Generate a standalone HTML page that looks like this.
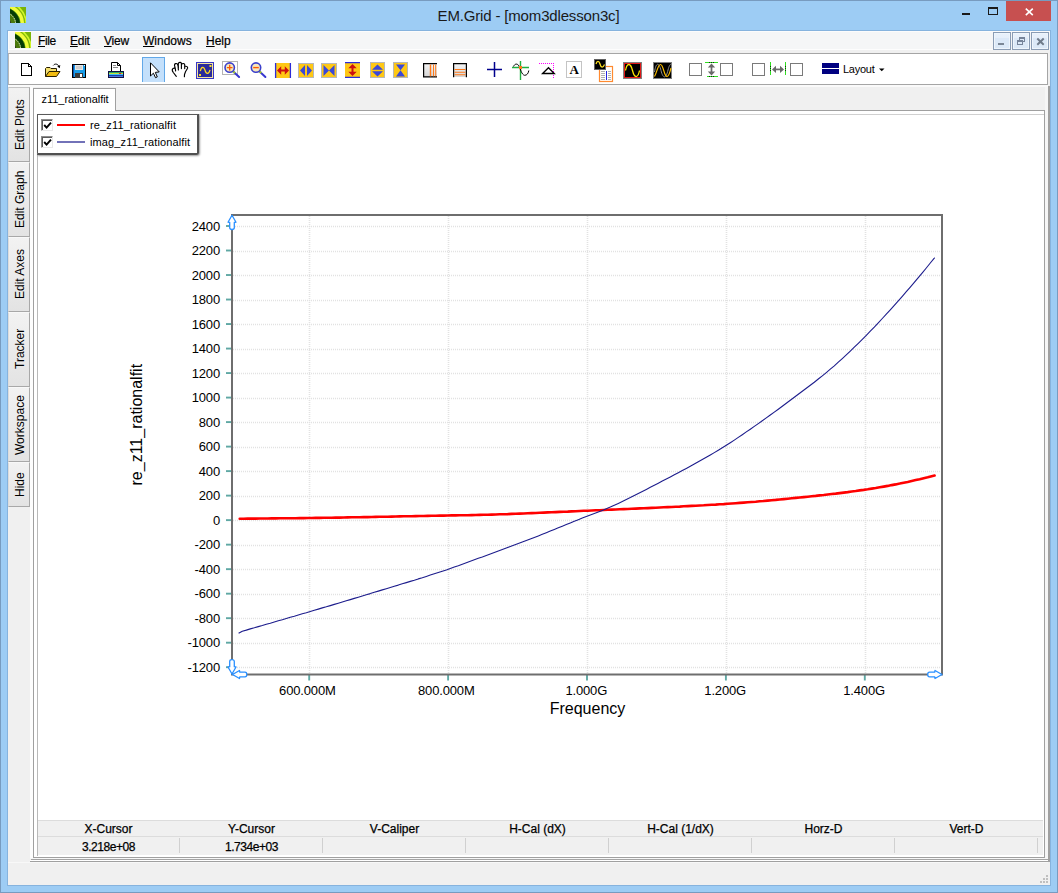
<!DOCTYPE html>
<html><head><meta charset="utf-8"><title>EM.Grid - [mom3dlesson3c]</title>
<style>
*{box-sizing:border-box;margin:0;padding:0}
html,body{width:1058px;height:893px;overflow:hidden}
body{background:#9dccf4;font-family:"Liberation Sans",Arial,sans-serif;position:relative;color:#000}
.abs{position:absolute}
#frame{left:0;top:0;width:1058px;height:893px;border:1px solid #789bbf}
#title{left:0;top:6px;width:1058px;text-align:center;font-size:15px;line-height:20px;letter-spacing:-0.16px;color:#1a1a1a;text-indent:-1px}
#closeb{left:1006px;top:1px;width:45px;height:20px;background:#c75050}
#client{left:8px;top:31px;width:1042px;height:854px;background:#f0f0f0}
#menubar{left:8px;top:31px;width:1042px;height:19px;background:#f5f6f7;border-bottom:1px solid #fdfdfd;border-top:1px solid #fcfcfc;border-left:1px solid #fcfcfc}
.mi{-webkit-text-stroke:0.2px #000;top:34px;font-size:12px;line-height:14px;height:14px;white-space:pre}
.mi u{text-decoration:underline;text-decoration-thickness:1px;text-underline-offset:1px}
.mdib{top:32px;width:18px;height:18px;border:1px solid #8a9cb4;background:linear-gradient(#e8f1fb 0,#e6effa 30%,#dbe8f7 34%,#dce9f7 100%);box-shadow:inset 0 0 0 1px #eef5fc}
#toolbar{left:8px;top:53px;width:1040px;height:32px;background:#fff;border:1px solid #a5a5a5;border-left-color:#b8b8b8}
.stab{left:8px;width:22px;border-top:1px solid #f8f8f8;border-left:1px solid #dcdcdc;border-right:1px solid #a8a8a8;border-bottom:1px solid #a8a8a8;background:linear-gradient(#f2f2f2,#e3e3e3)}
.stab span{position:absolute;left:0;top:0;display:block;white-space:pre;font-size:12px;line-height:12px;transform-origin:0 0}
#tabpanel{left:33px;top:110px;width:1012px;height:748px;background:#fff;border:1px solid #a0a0a0}
#tab{left:33px;top:88px;width:83px;height:23px;background:#fff;border:1px solid #a0a0a0;border-bottom:none;font-size:11px;line-height:13px;padding:4px 0 0 7.500px;letter-spacing:-0.04px;white-space:pre}
#graph{left:37px;top:114px;width:1007px;height:742px;border-left:1px solid #b9b9b9;border-top:1px solid #d0d0d0;background:#fff}
#legend{left:37px;top:114px;width:162px;height:41px;background:#fff;border:1px solid #5a5a5a;border-right:2px solid #505050;border-bottom:2px solid #505050;border-bottom-right-radius:3px;box-shadow:1px 1px 2px rgba(0,0,0,.4)}
.cb{width:12px;height:12px;background:#fff;border:1px solid;border-color:#8c8c8c #e8e8e8 #e8e8e8 #8c8c8c;box-shadow:inset 1px 1px 0 #5a5a5a}
.lt{font-size:11px;line-height:13px;white-space:pre;left:90px}
#stat{left:38px;top:820px;width:1005px;height:35px;background:#f0f0f0;border-top:1px solid #dcdcdc}
.sh{-webkit-text-stroke:0.25px #000;top:822px;width:143px;text-align:center;font-size:12px;line-height:14px;white-space:pre}
.sv{-webkit-text-stroke:0.25px #000;top:840px;width:143px;text-align:center;font-size:12px;line-height:14px;letter-spacing:-0.45px;white-space:pre}
.sep{top:838px;width:1px;height:15px;background:#d0d0d0}
</style></head><body>
<div class="abs" id="frame"></div>
<!-- title bar -->
<svg class="abs" style="left:10px;top:7px" width="16" height="16" viewBox="0 0 16 16">
<defs><clipPath id="ac"><rect width="16" height="16"/></clipPath></defs>
<rect width="16" height="16" fill="#7ab408"/>
<g clip-path="url(#ac)" fill="none">
<circle cx="-6" cy="17" r="22.2" stroke="#d0f428" stroke-width="1.700"/>
<circle cx="-6" cy="17" r="20.7" stroke="#86b80c" stroke-width="0.900"/>
<circle cx="-6" cy="17" r="18.2" stroke="#f2fc3c" stroke-width="3.800"/>
<circle cx="-6" cy="17" r="16.3" stroke="#6aa818" stroke-width="1"/>
<circle cx="-6" cy="17" r="14" stroke="#063c06" stroke-width="4"/>
<circle cx="-6" cy="17" r="12" fill="#4a7a0c"/>
<circle cx="-6" cy="17" r="11.6" stroke="#f4f4f4" stroke-width="1" stroke-dasharray="1.100 0.900"/>
<circle cx="-6" cy="17" r="7" fill="#2c2430"/>
</g></svg>
<div class="abs" id="title">EM.Grid - [mom3dlesson3c]</div>
<div class="abs" style="left:962px;top:13px;width:8px;height:2px;background:#1a1a1a"></div>
<div class="abs" style="left:988px;top:7px;width:10px;height:8px;border:1px solid #1a1a1a;border-top-width:2px"></div>
<div class="abs" id="closeb"><svg class="abs" style="left:19px;top:6px" width="9" height="9" viewBox="0 0 9 9"><path d="M0.800,1.600 L7.800,8.200 M7.800,1.600 L0.800,8.200" stroke="#fff" stroke-width="1.600"/></svg></div>
<!-- client -->
<div class="abs" style="left:7px;top:30px;width:1044px;height:856px;background:#86b3de"></div>
<div class="abs" id="client"></div>
<div class="abs" id="menubar"></div>
<svg class="abs" style="left:15px;top:32px" width="16" height="16" viewBox="0 0 16 16">
<defs><clipPath id="bc"><rect width="16" height="16"/></clipPath></defs>
<rect width="16" height="16" fill="#7ab408"/>
<g clip-path="url(#bc)" fill="none">
<circle cx="-6" cy="17" r="22.2" stroke="#d0f428" stroke-width="1.700"/>
<circle cx="-6" cy="17" r="20.7" stroke="#86b80c" stroke-width="0.900"/>
<circle cx="-6" cy="17" r="18.2" stroke="#f2fc3c" stroke-width="3.800"/>
<circle cx="-6" cy="17" r="16.3" stroke="#6aa818" stroke-width="1"/>
<circle cx="-6" cy="17" r="14" stroke="#063c06" stroke-width="4"/>
<circle cx="-6" cy="17" r="12" fill="#4a7a0c"/>
<circle cx="-6" cy="17" r="11.6" stroke="#f4f4f4" stroke-width="1" stroke-dasharray="1.100 0.900"/>
<circle cx="-6" cy="17" r="7" fill="#2c2430"/>
</g></svg>
<div class="abs mi" style="left:38px;letter-spacing:-0.35px"><u>F</u>ile</div>
<div class="abs mi" style="left:70px;letter-spacing:-0.25px"><u>E</u>dit</div>
<div class="abs mi" style="left:104px;letter-spacing:-0.2px"><u>V</u>iew</div>
<div class="abs mi" style="left:143px"><u>W</u>indows</div>
<div class="abs mi" style="left:206px"><u>H</u>elp</div>
<div class="abs mdib" style="left:993px"><div class="abs" style="left:4px;top:10px;width:6px;height:2px;background:#7b8796"></div></div>
<div class="abs mdib" style="left:1012px"><svg class="abs" style="left:3px;top:3px" width="10" height="10" viewBox="0 0 10 10" shape-rendering="crispEdges" fill="#76849a"><rect x="3" y="1" width="6" height="2"/><rect x="8" y="1" width="1" height="5"/><rect x="7" y="5" width="2" height="1"/><rect x="3" y="3" width="1" height="1"/><rect x="1" y="4" width="6" height="2"/><rect x="1" y="4" width="1" height="5"/><rect x="6" y="4" width="1" height="5"/><rect x="1" y="8" width="6" height="1"/></svg></div>
<div class="abs mdib" style="left:1031px"><svg class="abs" style="left:4px;top:4px" width="9" height="9" viewBox="0 0 9 9"><path d="M1.300,1.500 L7.700,7.700 M7.700,1.500 L1.300,7.700" stroke="#6f7b8a" stroke-width="1.900"/></svg></div>
<!-- toolbar -->
<div class="abs" id="toolbar"></div>
<svg class="abs" style="left:0;top:0" width="1058" height="893" viewBox="0 0 1058 893">
<g shape-rendering="crispEdges"><path d="M21.5,63.5 H28.5 L31.5,66.5 V75.5 H21.5 Z" fill="#fff" stroke="#000"/><path d="M28.5,63.5 V66.5 H31.5" fill="none" stroke="#000"/></g>
<path d="M45.5,76.5 V68.5 L46.5,67.5 H50 L51,68.5 H56.5 V71.5" fill="#f4e070" stroke="#2a2000" stroke-width="1"/><path d="M45.5,76.5 L49,71.5 H60 L56.5,76.5 Z" fill="#f2bc10" stroke="#2a2000" stroke-width="1" stroke-linejoin="round"/><path d="M53.300,65.400 C54.800,63.400 57.800,63.600 59,66.600" fill="none" stroke="#000" stroke-width="1"/><path d="M57.300,66.600 L59.700,68.200 L60.300,65 Z" fill="#000"/>
<g shape-rendering="crispEdges"><rect x="72.5" y="64.5" width="13" height="13" fill="#189ce8" stroke="#000"/><rect x="75" y="65" width="8" height="5" fill="#e6e6e6"/><rect x="76" y="66" width="6" height="3" fill="#cfcfcf"/><rect x="75" y="73" width="8" height="5" fill="#3c3c3c"/><rect x="80" y="74" width="2" height="3" fill="#fff"/><rect x="84" y="65" width="1" height="1" fill="#fff"/><rect x="73" y="65" width="1" height="12" fill="#0a50b0"/></g>
<path d="M111.5,71 V62.5 H117.5 L120.5,65.5 V71" fill="#fff" stroke="#000" stroke-width="1"/><path d="M117.5,62.5 V65.5 H120.5" fill="none" stroke="#000" stroke-width="1"/><path d="M113,65.5 H116 M113,67.5 H118" stroke="#888" stroke-width="1"/><g shape-rendering="crispEdges"><rect x="108" y="71" width="16" height="7" fill="#101040"/><rect x="109" y="72" width="14" height="1" fill="#2aa868"/><rect x="109" y="73" width="14" height="1" fill="#c8e038"/><rect x="109" y="74" width="14" height="1" fill="#38c0f0"/><rect x="109" y="75" width="14" height="1" fill="#1a38b0"/><rect x="109" y="76" width="14" height="1" fill="#4a78dc"/><rect x="119" y="73" width="2" height="1" fill="#e02020"/><rect x="121" y="73" width="1" height="1" fill="#f0a020"/></g>
<g shape-rendering="crispEdges"><rect x="142" y="57" width="23" height="25" fill="#c4e0fb"/><path d="M142.500,82 V57.500 H164.500 V82" fill="none" stroke="#62a8e8"/></g>
<path d="M150.500,62.800 V76 L153.400,73.200 L155.500,77.700 L157.300,76.900 L155.300,72.400 L159.200,71.900 Z" fill="#fff" stroke="#000" stroke-width="1" stroke-linejoin="miter"/>
<path d="M176.300,76.400 L173.300,72.500 C172.300,71 171.900,69.300 172.900,68.600 C173.800,68 175,68.200 175.300,68.600 L175.600,70.900 M175.300,68.600 L174.500,65.300 C174.300,63.600 176.500,63 177.400,64 C178.300,65.500 178.400,68 178.400,69.900 M178.400,68 L178.300,64 C178.600,62 181,62 181.400,63.400 L181.400,68.600 M181.500,65 C181.600,63.200 184.200,63 184.700,64.600 L184.700,68.600 M185.400,66.300 C186.600,66 187.900,66.800 187.600,68.200 L185.600,71.500 L184.500,74.500 L184.400,76.700" fill="none" stroke="#000" stroke-width="1.150" stroke-linecap="round" stroke-linejoin="round"/>
<g shape-rendering="crispEdges"><rect x="196.5" y="62.5" width="17" height="16" fill="#2a2a9c" stroke="#3838c8"/><rect x="197.5" y="63.5" width="15" height="14" fill="none" stroke="#f4e4a0"/></g><path d="M200.300,71.200 C201.300,66.300 203.800,66.300 205,70.300 C206.300,74.600 208.800,74.300 210,69.800" fill="none" stroke="#ffd820" stroke-width="1.250"/><rect x="209.500" y="65" width="2" height="2" fill="#ffe020"/><rect x="199" y="74" width="2" height="2" fill="#ffe020"/>
<rect x="222.5" y="61.5" width="15" height="13" fill="#fff" stroke="#b4b4b4" shape-rendering="crispEdges"/>
<path d="M233.0,71.2 L239.1,77" stroke="#3838d0" stroke-width="2" stroke-linecap="round"/><path d="M233.0,71.2 L234.89999999999998,73" stroke="#a0c830" stroke-width="2"/>
<circle cx="229.7" cy="67.6" r="4.700" fill="#f6e8bc" stroke="#3c40cc" stroke-width="1.600"/>
<path d="M226.89999999999998,67.6 H232.5 M229.7,64.8 V70.4" stroke="#ff5a00" stroke-width="1.300"/>
<path d="M259.3,71.2 L265.4,77" stroke="#3838d0" stroke-width="2" stroke-linecap="round"/><path d="M259.3,71.2 L261.2,73" stroke="#a0c830" stroke-width="2"/>
<circle cx="256" cy="67.6" r="4.700" fill="#f6e8bc" stroke="#3c40cc" stroke-width="1.600"/>
<path d="M253.2,67.6 H258.8" stroke="#ff5a00" stroke-width="1.400"/>
<rect x="275" y="63" width="16" height="15" fill="#ffc814"/><path d="M275.600,63 V78 M290.400,63 V78" stroke="#2c2cd8" stroke-width="1.300"/><path d="M279,70.500 H287" stroke="#cc1010" stroke-width="2"/><path d="M277,70.500 L281.200,66.300 V74.700 Z M289,70.500 L284.800,66.300 V74.700 Z" fill="#cc1010"/>
<rect x="298.5" y="63.5" width="15" height="14" fill="#ffc814" stroke="#b8b8b8" shape-rendering="crispEdges"/><path d="M300,70.500 L305,65 V76 Z M312,70.500 L307,65 V76 Z" fill="#3a48d8"/>
<rect x="321.5" y="63.5" width="15" height="14" fill="#ffc814" stroke="#b8b8b8" shape-rendering="crispEdges"/><path d="M323.500,65 L329,70.500 L323.500,76 Z M334.500,65 L329,70.500 L334.500,76 Z" fill="#3a48d8"/>
<rect x="345" y="62" width="15" height="16" fill="#ffc814"/><path d="M345,62.600 H360 M345,77.400 H360" stroke="#2c2cd8" stroke-width="1.300"/><path d="M352.500,66 V74" stroke="#cc1010" stroke-width="2"/><path d="M352.500,64 L348.300,68.200 H356.700 Z M352.500,76 L348.300,71.800 H356.700 Z" fill="#cc1010"/>
<rect x="370.5" y="62.5" width="14" height="15" fill="#ffc814" stroke="#b8b8b8" shape-rendering="crispEdges"/><path d="M377.500,64.500 L372,69.700 H383 Z M377.500,76.500 L372,71.300 H383 Z" fill="#3a48d8"/>
<rect x="393.5" y="62.5" width="14" height="15" fill="#ffc814" stroke="#b8b8b8" shape-rendering="crispEdges"/><path d="M396,64.500 H405 L400.500,70.300 Z M396,76.500 H405 L400.500,70.300 Z" fill="#3a48d8"/>
<defs><linearGradient id="pg" x1="0" y1="0" x2="0" y2="1"><stop offset="0" stop-color="#f4f4f4"/><stop offset="1" stop-color="#d4d4d4"/></linearGradient></defs>
<rect x="424" y="64" width="13" height="13" fill="url(#pg)"/><path d="M437,63.600 H423.600 V76.900 H437" fill="none" stroke="#000" stroke-width="1.200"/><path d="M430.500,64.500 V76.300" stroke="#ff7a1a" stroke-width="1.400"/><path d="M433.500,64.500 V76.300 M435.700,64.500 V76.300" stroke="#ff7a1a" stroke-width="1"/>
<rect x="454" y="64" width="12" height="13" fill="url(#pg)"/><path d="M453.600,77.300 V63.600 H466.400 V77.300" fill="none" stroke="#000" stroke-width="1.200"/><path d="M454.500,69.500 H465.500 M454.500,72.300 H465.500 M454.500,74.700 H465.500" stroke="#ff7a1a" stroke-width="1.100"/>
<path d="M487,69.500 H502 M494.500,62 V77" stroke="#00008c" stroke-width="1.500"/>
<path d="M520.500,61 V80 M512,67.500 H529" stroke="#20b040" stroke-width="1.400"/><path d="M513.500,66.500 C514.800,63.500 517.500,63.300 519,66 C520.500,69 521.500,74.500 524.500,75.300 C527,75.500 528.500,73 528.800,70.500" fill="none" stroke="#000" stroke-width="1"/><rect x="519" y="66" width="3" height="3" fill="#ff7a1a"/>
<path d="M539,63.500 H554 M553.500,63 V78" stroke="#ff00ff" stroke-width="1" stroke-dasharray="1 1" shape-rendering="crispEdges"/><path d="M542.600,73.500 L548.500,67.700 L554.300,73.500 Z" fill="none" stroke="#000" stroke-width="1.300"/>
<rect x="566.5" y="61.5" width="15" height="16" fill="#fff" stroke="#c4c4c4" shape-rendering="crispEdges"/><text x="574.300" y="73.800" text-anchor="middle" font-family="Liberation Serif, serif" font-weight="bold" font-size="13" fill="#000">A</text>
<rect x="599.5" y="66.5" width="13" height="15" fill="#fff" stroke="#ff8a30" stroke-width="1.200"/><path d="M601,71.500 H605 M601,73.500 H605 M601,75.500 H605 M601,77.500 H605 M601,79.500 H605 M608,71.500 H611 M608,73.500 H611 M608,75.500 H611 M608,77.500 H611 M608,79.500 H611" stroke="#b0b0b0" stroke-width="1" shape-rendering="crispEdges"/><path d="M606.500,70.500 V80" stroke="#2424e0" stroke-width="1" shape-rendering="crispEdges"/><rect x="594.5" y="59.5" width="11" height="10" fill="#000" stroke="#606060"/><path d="M596,64 C597,60.500 599,60.500 600,64 C601,68 603,68 604.500,64.500" fill="none" stroke="#ffe020" stroke-width="1.300"/>
<rect x="623.5" y="62.5" width="18" height="16" fill="#000" stroke="#808080" shape-rendering="crispEdges"/><rect x="624.5" y="63.5" width="16" height="14" fill="none" stroke="#e01818" shape-rendering="crispEdges"/><path d="M625.500,70.500 C627,62.500 630.500,62.500 632.500,70.500 C634.500,78.500 638,78.500 639.500,70.500" fill="none" stroke="#ffe800" stroke-width="1.300"/>
<rect x="653.5" y="62.5" width="18" height="16" fill="#000" stroke="#808080" shape-rendering="crispEdges"/><path d="M654.500,72 C656,62 659,62 661,70.500 C663,79 666,79 668,70 C669,66 670,64.500 671,64" fill="none" stroke="#8c8c8c" stroke-width="1"/><path d="M654.500,76.500 C657,72 658,64.500 660.500,64.500 C663.500,64.500 664,76.500 667,76.500 C669,76.500 670,72 671,68" fill="none" stroke="#ffc000" stroke-width="1.150"/>
<rect x="689.5" y="63.5" width="12" height="12" fill="#fff" stroke="#7a7a7a" stroke-width="1"/>
<rect x="720.5" y="63.5" width="12" height="12" fill="#fff" stroke="#7a7a7a" stroke-width="1"/>
<g shape-rendering="crispEdges"><path d="M705,62.500 H718 M707,76.500 H718" stroke="#30e020" stroke-width="1"/><path d="M709,62.500 H715 M709,76.500 H715" stroke="#103010" stroke-width="1" stroke-dasharray="1 1"/></g><path d="M711.500,66 V73" stroke="#6a6a6a" stroke-width="1.700"/><path d="M711.500,63.600 L707.800,67.600 H715.200 Z M711.500,75.400 L707.800,71.400 H715.200 Z" fill="#6a6a6a"/>
<rect x="752.5" y="63.5" width="12" height="12" fill="#fff" stroke="#7a7a7a" stroke-width="1"/>
<rect x="790.5" y="63.5" width="12" height="12" fill="#fff" stroke="#7a7a7a" stroke-width="1"/>
<g shape-rendering="crispEdges"><path d="M770.500,62 V75 M785.500,62 V75" stroke="#30e020" stroke-width="1"/><path d="M770.500,66 V72 M785.500,66 V72" stroke="#103010" stroke-width="1" stroke-dasharray="1 1"/></g><path d="M774.500,69.400 H781.500" stroke="#6a6a6a" stroke-width="1.700"/><path d="M772,69.400 L776,65.700 V73.100 Z M784,69.400 L780,65.700 V73.100 Z" fill="#6a6a6a"/>
<g shape-rendering="crispEdges"><rect x="822" y="63" width="17" height="5" fill="#000080"/><rect x="822" y="69" width="17" height="5" fill="#000080"/></g>
<path d="M879,68.500 H884.500 L881.750,71.300 Z" fill="#000"/>
</svg>
<div class="abs" style="left:843px;top:63px;font-size:11px;line-height:13px;letter-spacing:-0.25px;white-space:pre;transform:scaleY(1.07);transform-origin:0 10px">Layout</div>
<!-- right shadow line -->
<div class="abs" style="left:1048px;top:86px;width:2px;height:776px;background:#a0a0a0"></div>
<div class="abs" style="left:8px;top:85px;width:1040px;height:2px;background:#fafafa"></div>
<!-- sidebar -->
<div class="abs stab" style="top:87px;height:75px;border-top-color:#c4c4c4"><span style="transform:translate(5px,62px) rotate(-90deg)">Edit Plots</span></div>
<div class="abs stab" style="top:162px;height:75px"><span style="transform:translate(5px,65px) rotate(-90deg)">Edit Graph</span></div>
<div class="abs stab" style="top:237px;height:75px"><span style="transform:translate(5px,61px) rotate(-90deg)">Edit Axes</span></div>
<div class="abs stab" style="top:312px;height:75px"><span style="transform:translate(5px,56px) rotate(-90deg)">Tracker</span></div>
<div class="abs stab" style="top:387px;height:75px"><span style="transform:translate(5px,67px) rotate(-90deg)">Workspace</span></div>
<div class="abs stab" style="top:462px;height:45px"><span style="transform:translate(5px,34px) rotate(-90deg)">Hide</span></div>
<!-- tab panel -->
<div class="abs" style="left:30px;top:87px;width:3px;height:772px;background:#fdfdfd"></div>
<div class="abs" style="left:1045px;top:87px;width:3px;height:772px;background:#f6f6f6"></div>
<div class="abs" style="left:116px;top:88px;width:929px;height:22px;background:#f0f0f0"></div>
<div class="abs" id="tabpanel"></div>
<div class="abs" id="tab">z11_rationalfit</div>
<div class="abs" id="graph"></div>
<svg class="abs" style="left:0;top:0" width="1058" height="893" viewBox="0 0 1058 893">
<g stroke="#e2e2e2" stroke-width="1.600" stroke-dasharray="1 1" ><line x1="233" y1="667.5" x2="941" y2="667.5"/><line x1="233" y1="643.5" x2="941" y2="643.5"/><line x1="233" y1="618.5" x2="941" y2="618.5"/><line x1="233" y1="594.5" x2="941" y2="594.5"/><line x1="233" y1="569.5" x2="941" y2="569.5"/><line x1="233" y1="545.5" x2="941" y2="545.5"/><line x1="233" y1="520.5" x2="941" y2="520.5"/><line x1="233" y1="496.5" x2="941" y2="496.5"/><line x1="233" y1="471.5" x2="941" y2="471.5"/><line x1="233" y1="447.5" x2="941" y2="447.5"/><line x1="233" y1="422.5" x2="941" y2="422.5"/><line x1="233" y1="398.5" x2="941" y2="398.5"/><line x1="233" y1="373.5" x2="941" y2="373.5"/><line x1="233" y1="349.5" x2="941" y2="349.5"/><line x1="233" y1="324.5" x2="941" y2="324.5"/><line x1="233" y1="300.5" x2="941" y2="300.5"/><line x1="233" y1="275.5" x2="941" y2="275.5"/><line x1="233" y1="251.5" x2="941" y2="251.5"/><line x1="233" y1="226.5" x2="941" y2="226.5"/><line x1="309.5" y1="216" x2="309.5" y2="673.5"/><line x1="448.5" y1="216" x2="448.5" y2="673.5"/><line x1="587.5" y1="216" x2="587.5" y2="673.5"/><line x1="726.5" y1="216" x2="726.5" y2="673.5"/><line x1="865.5" y1="216" x2="865.5" y2="673.5"/></g>
<g stroke="#5fa8a4" stroke-width="1.9"><line x1="226" y1="667.20" x2="232" y2="667.20"/><line x1="226" y1="642.69" x2="232" y2="642.69"/><line x1="226" y1="618.18" x2="232" y2="618.18"/><line x1="226" y1="593.67" x2="232" y2="593.67"/><line x1="226" y1="569.16" x2="232" y2="569.16"/><line x1="226" y1="544.65" x2="232" y2="544.65"/><line x1="226" y1="520.13" x2="232" y2="520.13"/><line x1="226" y1="495.62" x2="232" y2="495.62"/><line x1="226" y1="471.11" x2="232" y2="471.11"/><line x1="226" y1="446.60" x2="232" y2="446.60"/><line x1="226" y1="422.09" x2="232" y2="422.09"/><line x1="226" y1="397.58" x2="232" y2="397.58"/><line x1="226" y1="373.07" x2="232" y2="373.07"/><line x1="226" y1="348.56" x2="232" y2="348.56"/><line x1="226" y1="324.04" x2="232" y2="324.04"/><line x1="226" y1="299.53" x2="232" y2="299.53"/><line x1="226" y1="275.02" x2="232" y2="275.02"/><line x1="226" y1="250.51" x2="232" y2="250.51"/><line x1="226" y1="226.00" x2="232" y2="226.00"/><line x1="309.20" y1="674.5" x2="309.20" y2="680.5"/><line x1="448.10" y1="674.5" x2="448.10" y2="680.5"/><line x1="587.00" y1="674.5" x2="587.00" y2="680.5"/><line x1="725.90" y1="674.5" x2="725.90" y2="680.5"/><line x1="864.80" y1="674.5" x2="864.80" y2="680.5"/></g>
<rect x="232" y="215" width="710" height="459.5" fill="none" stroke="#6e6e6e" stroke-width="2"/>
<polyline points="239.7,518.7 243.7,518.7 247.7,518.6 251.7,518.6 255.7,518.6 259.7,518.5 263.7,518.5 267.7,518.5 271.7,518.4 275.7,518.4 279.7,518.3 283.7,518.3 287.7,518.3 291.7,518.2 295.7,518.2 299.7,518.1 303.7,518.1 307.7,518.0 311.7,518.0 315.7,517.9 319.7,517.9 323.7,517.8 327.7,517.7 331.7,517.7 335.7,517.6 339.7,517.6 343.7,517.5 347.7,517.4 351.7,517.3 355.7,517.3 359.7,517.2 363.7,517.1 367.7,517.1 371.7,517.0 375.7,516.9 379.7,516.8 383.7,516.7 387.7,516.7 391.7,516.6 395.7,516.5 399.7,516.4 403.7,516.3 407.7,516.3 411.7,516.2 415.7,516.1 419.7,516.0 423.7,516.0 427.7,515.9 431.7,515.8 435.7,515.7 439.7,515.6 443.7,515.6 447.7,515.5 451.7,515.4 455.7,515.4 459.7,515.3 463.7,515.2 467.7,515.2 471.7,515.1 475.7,515.0 479.7,514.9 483.7,514.8 487.7,514.7 491.7,514.6 495.7,514.5 499.7,514.3 503.7,514.2 507.7,514.1 511.7,513.9 515.7,513.8 519.7,513.6 523.7,513.5 527.7,513.3 531.7,513.1 535.7,513.0 539.7,512.8 543.7,512.6 547.7,512.4 551.7,512.3 555.7,512.1 559.7,511.9 563.7,511.7 567.7,511.6 571.7,511.4 575.7,511.2 579.7,511.0 583.7,510.8 587.7,510.7 591.7,510.5 595.7,510.3 599.7,510.2 603.7,510.0 607.7,509.8 611.7,509.6 615.7,509.5 619.7,509.3 623.7,509.1 627.7,509.0 631.7,508.8 635.7,508.6 639.7,508.4 643.7,508.3 647.7,508.1 651.7,507.9 655.7,507.7 659.7,507.5 663.7,507.3 667.7,507.1 671.7,507.0 675.7,506.8 679.7,506.6 683.7,506.3 687.7,506.1 691.7,505.9 695.7,505.7 699.7,505.5 703.7,505.3 707.7,505.0 711.7,504.8 715.7,504.6 719.7,504.3 723.7,504.1 727.7,503.8 731.7,503.5 735.7,503.2 739.7,502.9 743.7,502.6 747.7,502.3 751.7,502.0 755.7,501.7 759.7,501.3 763.7,501.0 767.7,500.6 771.7,500.2 775.7,499.9 779.7,499.5 783.7,499.1 787.7,498.7 791.7,498.3 795.7,497.9 799.7,497.5 803.7,497.1 807.7,496.7 811.7,496.3 815.7,495.9 819.7,495.4 823.7,495.0 827.7,494.5 831.7,494.0 835.7,493.6 839.7,493.1 843.7,492.6 847.7,492.1 851.7,491.5 855.7,491.0 859.7,490.4 863.7,489.9 867.7,489.3 871.7,488.6 875.7,488.0 879.7,487.3 883.7,486.6 887.7,485.9 891.7,485.1 895.7,484.4 899.7,483.6 903.7,482.7 907.7,481.9 911.7,481.0 915.7,480.1 919.7,479.2 923.7,478.2 927.7,477.3 931.7,476.2 934.6,475.5" fill="none" stroke="#ff0000" stroke-width="2.600" stroke-linejoin="round" stroke-linecap="round"/>
<polyline points="238.6,633.3 242.3,631.2 246.3,630.1 250.3,628.9 254.3,627.8 258.3,626.6 262.3,625.5 266.3,624.3 270.3,623.2 274.3,622.0 278.3,620.8 282.3,619.7 286.3,618.5 290.3,617.3 294.3,616.2 298.3,615.0 302.3,613.8 306.3,612.7 310.3,611.5 314.3,610.3 318.3,609.1 322.3,607.9 326.3,606.8 330.3,605.6 334.3,604.4 338.3,603.2 342.3,602.0 346.3,600.8 350.3,599.6 354.3,598.4 358.3,597.2 362.3,596.0 366.3,594.8 370.3,593.6 374.3,592.3 378.3,591.1 382.3,589.9 386.3,588.7 390.3,587.5 394.3,586.3 398.3,585.1 402.3,583.8 406.3,582.6 410.3,581.4 414.3,580.2 418.3,578.9 422.3,577.7 426.3,576.4 430.3,575.1 434.3,573.8 438.3,572.5 442.3,571.2 446.3,569.9 450.3,568.5 454.3,567.1 458.3,565.7 462.3,564.2 466.3,562.8 470.3,561.3 474.3,559.8 478.3,558.3 482.3,556.9 486.3,555.4 490.3,553.9 494.3,552.5 498.3,551.0 502.3,549.5 506.3,548.0 510.3,546.6 514.3,545.1 518.3,543.6 522.3,542.1 526.3,540.5 530.3,539.0 534.3,537.4 538.3,535.9 542.3,534.3 546.3,532.7 550.3,531.1 554.3,529.4 558.3,527.8 562.3,526.2 566.3,524.6 570.3,522.9 574.3,521.3 578.3,519.7 582.3,518.1 586.3,516.6 590.3,515.0 594.3,513.6 598.3,512.1 602.3,510.5 606.3,508.8 610.3,507.1 614.3,505.2 618.3,503.4 622.3,501.5 626.3,499.5 630.3,497.6 634.3,495.5 638.3,493.5 642.3,491.5 646.3,489.4 650.3,487.3 654.3,485.2 658.3,483.2 662.3,481.1 666.3,479.0 670.3,476.9 674.3,474.8 678.3,472.7 682.3,470.6 686.3,468.4 690.3,466.3 694.3,464.1 698.3,461.8 702.3,459.6 706.3,457.3 710.3,455.0 714.3,452.6 718.3,450.2 722.3,447.8 726.3,445.3 730.3,442.7 734.3,440.1 738.3,437.4 742.3,434.7 746.3,431.9 750.3,429.2 754.3,426.4 758.3,423.6 762.3,420.8 766.3,417.9 770.3,415.0 774.3,412.1 778.3,409.2 782.3,406.2 786.3,403.3 790.3,400.3 794.3,397.3 798.3,394.2 802.3,391.2 806.3,388.2 810.3,385.2 814.3,382.2 818.3,379.0 822.3,375.9 826.3,372.6 830.3,369.2 834.3,365.8 838.3,362.2 842.3,358.6 846.3,354.9 850.3,351.1 854.3,347.2 858.3,343.3 862.3,339.3 866.3,335.3 870.3,331.2 874.3,327.1 878.3,322.8 882.3,318.5 886.3,314.2 890.3,309.8 894.3,305.3 898.3,300.8 902.3,296.3 906.3,291.7 910.3,287.1 914.3,282.4 918.3,277.6 922.3,272.8 926.3,268.0 930.3,263.0 934.3,258.1 934.6,257.7" fill="none" stroke="#1c1c8c" stroke-width="1.1" stroke-linejoin="round"/>
<g font-family="Liberation Sans, Arial, sans-serif" font-size="13" letter-spacing="-0.15" fill="#000"><text x="220" y="671.9" text-anchor="end">-1200</text><text x="220" y="647.4" text-anchor="end">-1000</text><text x="220" y="622.9" text-anchor="end">-800</text><text x="220" y="598.4" text-anchor="end">-600</text><text x="220" y="573.9" text-anchor="end">-400</text><text x="220" y="549.3" text-anchor="end">-200</text><text x="220" y="524.8" text-anchor="end">0</text><text x="220" y="500.3" text-anchor="end">200</text><text x="220" y="475.8" text-anchor="end">400</text><text x="220" y="451.3" text-anchor="end">600</text><text x="220" y="426.8" text-anchor="end">800</text><text x="220" y="402.3" text-anchor="end">1000</text><text x="220" y="377.8" text-anchor="end">1200</text><text x="220" y="353.3" text-anchor="end">1400</text><text x="220" y="328.7" text-anchor="end">1600</text><text x="220" y="304.2" text-anchor="end">1800</text><text x="220" y="279.7" text-anchor="end">2000</text><text x="220" y="255.2" text-anchor="end">2200</text><text x="220" y="230.7" text-anchor="end">2400</text><text x="307.4" y="694.8" text-anchor="middle">600.000M</text><text x="446.3" y="694.8" text-anchor="middle">800.000M</text><text x="586.3" y="694.8" text-anchor="middle">1.000G</text><text x="725.2" y="694.8" text-anchor="middle">1.200G</text><text x="864.1" y="694.8" text-anchor="middle">1.400G</text></g>
<text x="587.5" y="713.6" text-anchor="middle" font-family="Liberation Sans, Arial, sans-serif" font-size="16" fill="#000">Frequency</text>
<text transform="translate(142,424.7) rotate(-90)" text-anchor="middle" font-family="Liberation Sans, Arial, sans-serif" font-size="16" fill="#000">re_z11_rationalfit</text>
<g fill="#fff" stroke="#2a90ff" stroke-width="1.3" stroke-linejoin="round"><path d="M0,-7 L4,0 L2.3,0.3 L2.3,5.5 Q2.3,7.3 0,7.3 Q-2.3,7.3 -2.3,5.5 L-2.3,0.3 L-4,0 Z" transform="translate(232,222.2)"/><path d="M0,-7 L4,0 L2.3,0.3 L2.3,5.5 Q2.3,7.3 0,7.3 Q-2.3,7.3 -2.3,5.5 L-2.3,0.3 L-4,0 Z" transform="translate(232,667) rotate(180)"/><path d="M0,-7 L4,0 L2.3,0.3 L2.3,5.5 Q2.3,7.3 0,7.3 Q-2.3,7.3 -2.3,5.5 L-2.3,0.3 L-4,0 Z" transform="translate(239.5,674.5) rotate(-90)"/><path d="M0,-7 L4,0 L2.3,0.3 L2.3,5.5 Q2.3,7.3 0,7.3 Q-2.3,7.3 -2.3,5.5 L-2.3,0.3 L-4,0 Z" transform="translate(935,674.5) rotate(90)"/></g>
</svg>
<!-- legend -->
<div class="abs" id="legend"></div>
<div class="abs cb" style="left:41px;top:119px"><svg class="abs" style="left:1px;top:1px" width="9" height="9" viewBox="0 0 9 9"><path d="M1.2,4 L3.6,6.6 L8,1.6" fill="none" stroke="#000" stroke-width="1.9"/></svg></div>
<div class="abs cb" style="left:41px;top:136px"><svg class="abs" style="left:1px;top:1px" width="9" height="9" viewBox="0 0 9 9"><path d="M1.2,4 L3.6,6.6 L8,1.6" fill="none" stroke="#000" stroke-width="1.9"/></svg></div>
<div class="abs" style="left:57px;top:124px;width:28px;height:2px;background:#ff0000"></div>
<div class="abs" style="left:57px;top:141px;width:28px;height:1.5px;background:#7272b8"></div>
<div class="abs lt" style="top:119px;letter-spacing:0.14px">re_z11_rationalfit</div>
<div class="abs lt" style="top:136px;letter-spacing:0.13px">imag_z11_rationalfit</div>
<!-- status grid -->
<div class="abs" id="stat"></div>
<div class="abs" style="left:38px;top:836px;width:1005px;height:1px;background:#dcdcdc"></div>
<div class="abs sh" style="left:37px">X-Cursor</div>
<div class="abs sh" style="left:180px">Y-Cursor</div>
<div class="abs sh" style="left:323px">V-Caliper</div>
<div class="abs sh" style="left:466px">H-Cal (dX)</div>
<div class="abs sh" style="left:609px">H-Cal (1/dX)</div>
<div class="abs sh" style="left:752px">Horz-D</div>
<div class="abs sh" style="left:895px">Vert-D</div>
<div class="abs sv" style="left:37px">3.218e+08</div>
<div class="abs sv" style="left:180px">1.734e+03</div>
<div class="abs sep" style="left:179px"></div><div class="abs sep" style="left:322px"></div><div class="abs sep" style="left:465px"></div><div class="abs sep" style="left:608px"></div><div class="abs sep" style="left:751px"></div><div class="abs sep" style="left:894px"></div><div class="abs sep" style="left:1037px"></div>
<!-- bottom border lines + status bar -->
<div class="abs" style="left:30px;top:858px;width:1018px;height:1px;background:#f8f8f8"></div>
<div class="abs" style="left:31px;top:859px;width:1017px;height:1px;background:#a4a4a4"></div>
<div class="abs" style="left:30px;top:860px;width:1018px;height:1px;background:#fff"></div>
<div class="abs" style="left:30px;top:861px;width:1020px;height:1px;background:#a0a0a0"></div>
<div class="abs" style="left:8px;top:862px;width:1040px;height:1px;background:#f8f8f8"></div>
<svg class="abs" style="left:1040px;top:875px" width="9" height="9" viewBox="0 0 9 9" shape-rendering="crispEdges" fill="#bfbfbf"><rect x="6" y="0" width="2" height="2"/><rect x="3" y="3" width="2" height="2"/><rect x="6" y="3" width="2" height="2"/><rect x="0" y="6" width="2" height="2"/><rect x="3" y="6" width="2" height="2"/><rect x="6" y="6" width="2" height="2"/></svg>
</body></html>
